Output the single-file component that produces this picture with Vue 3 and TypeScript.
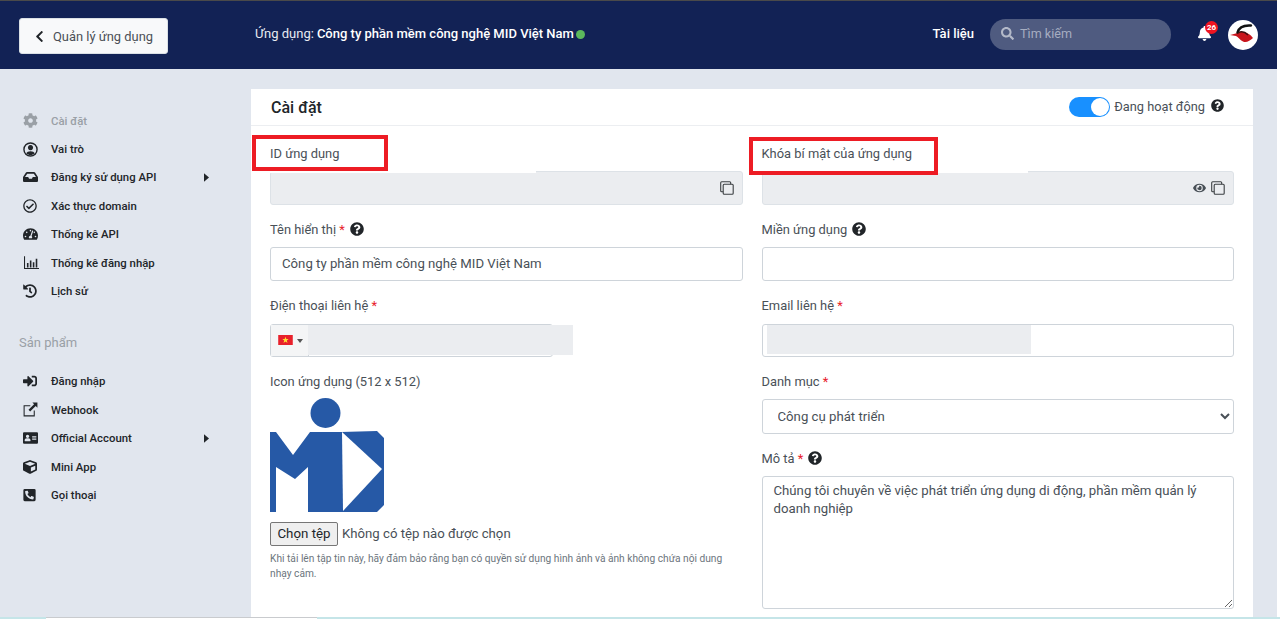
<script setup lang="ts">
interface NavItem { label: string; vb: string; d: string; w: number; h: number; caret?: boolean; muted?: boolean }
const cog = 'M487.4 315.7l-42.6-24.6c4.3-23.2 4.3-47 0-70.2l42.6-24.6c4.9-2.8 7.1-8.6 5.5-14-11.1-35.6-30-67.8-54.7-94.6-3.8-4.1-10-5.1-14.8-2.3L380.8 110c-17.9-15.4-38.5-27.3-60.8-35.1V25.8c0-5.6-3.9-10.5-9.4-11.7-36.7-8.2-74.3-7.8-109.2 0-5.5 1.2-9.4 6.1-9.4 11.7V75c-22.2 7.9-42.8 19.8-60.8 35.1L88.7 85.5c-4.9-2.8-11-1.9-14.8 2.3-24.7 26.7-43.6 58.9-54.7 94.6-1.7 5.4.6 11.2 5.5 14L67.3 221c-4.3 23.2-4.3 47 0 70.2l-42.6 24.6c-4.9 2.8-7.1 8.6-5.5 14 11.1 35.6 30 67.8 54.7 94.6 3.8 4.1 10 5.1 14.8 2.3l42.6-24.6c17.9 15.4 38.5 27.3 60.8 35.1v49.2c0 5.6 3.9 10.5 9.4 11.7 36.7 8.2 74.3 7.8 109.2 0 5.5-1.2 9.4-6.1 9.4-11.7v-49.2c22.2-7.9 42.8-19.8 60.8-35.1l42.6 24.6c4.9 2.8 11 1.9 14.8-2.3 24.7-26.7 43.6-58.9 54.7-94.6 1.5-5.5-.7-11.3-5.6-14.1zM256 336c-44.1 0-80-35.9-80-80s35.9-80 80-80 80 35.9 80 80-35.9 80-80 80z'
const userCircle = 'M248 8a248 248 0 1 0 0 496a248 248 0 1 0 0-496zM248 56a200 200 0 1 1 0 400a200 200 0 1 1 0-400zM248 105a88 88 0 1 0 .01 0zM105 385c20-48 70-72 143-72s123 24 143 72c-35 38-90 62-143 62s-108-24-143-62z'
const inbox = 'M567.938 243.908L462.25 85.374A48.003 48.003 0 0 0 422.311 64H153.689a48 48 0 0 0-39.938 21.374L8.062 243.908A47.994 47.994 0 0 0 0 270.533V400c0 26.51 21.49 48 48 48h480c26.51 0 48-21.49 48-48V270.533a47.994 47.994 0 0 0-8.062-26.625zM162.252 128h251.497l85.333 128H376l-32 64H232l-32-64H76.918l85.334-128z'
const checkCircle = 'M256 8C119.033 8 8 119.033 8 256s111.033 248 248 248 248-111.033 248-248S392.967 8 256 8zm0 48c110.532 0 200 89.451 200 200 0 110.532-89.451 200-200 200-110.532 0-200-89.451-200-200 0-110.532 89.451-200 200-200m140.204 130.267l-22.536-22.718c-4.667-4.705-12.265-4.736-16.97-.068L215.346 303.697l-59.792-60.277c-4.667-4.705-12.265-4.736-16.97-.069l-22.719 22.536c-4.705 4.667-4.736 12.265-.068 16.971l90.781 91.516c4.667 4.705 12.265 4.736 16.97.068l172.589-171.204c4.704-4.668 4.734-12.266.067-16.971z'
const gauge = 'M288 32C128.94 32 0 160.94 0 320c0 52.8 14.25 102.26 39.06 144.8 5.61 9.62 16.3 15.2 27.44 15.2h443c11.14 0 21.83-5.58 27.44-15.2C561.75 422.26 576 372.8 576 320c0-159.06-128.94-288-288-288zm0 64c14.71 0 26.58 10.13 30.32 23.65-1.11 2.26-2.64 4.23-3.45 6.67l-9.22 27.67c-5.13 3.49-10.97 6.01-17.64 6.01-17.67 0-32-14.33-32-32S270.33 96 288 96zM96 384c-17.67 0-32-14.33-32-32s14.33-32 32-32 32 14.33 32 32-14.33 32-32 32zm48-160c-17.67 0-32-14.33-32-32s14.33-32 32-32 32 14.33 32 32-14.33 32-32 32zm246.77-72.41l-61.33 184C343.13 347.33 352 364.54 352 384c0 11.72-3.38 22.55-8.88 32H232.88c-5.5-9.45-8.88-20.28-8.88-32 0-33.94 26.5-61.43 59.9-63.59l61.34-184.01c4.17-12.56 17.73-19.45 30.36-15.17 12.57 4.19 19.35 17.79 15.17 30.36zm14.66 57.2l15.52-46.55c3.47-1.29 7.13-2.23 11.05-2.23 17.67 0 32 14.33 32 32s-14.33 32-32 32c-11.38-.01-20.89-6.28-26.57-15.22zM480 384c-17.67 0-32-14.33-32-32s14.33-32 32-32 32 14.33 32 32-14.33 32-32 32z'
const chart = 'M0 40h36v404h476v36H0zM100 270h54v160H100zM200 190h54v240h-54zM300 250h54v180h-54zM400 130h54v300h-54z'
const history = 'M504 255.531c.253 136.64-111.18 248.372-247.82 248.468-59.015.042-113.223-20.53-155.822-54.911-11.077-8.94-11.905-25.541-1.839-35.607l11.267-11.267c8.609-8.609 22.353-9.551 31.891-1.984C173.062 425.135 212.781 440 256 440c101.705 0 184-82.311 184-184 0-101.705-82.311-184-184-184-48.814 0-93.149 18.969-126.068 49.932l50.754 50.754c10.08 10.08 2.941 27.314-11.313 27.314H24c-8.837 0-16-7.163-16-16V38.627c0-14.254 17.234-21.393 27.314-11.314l49.372 49.372C129.209 34.136 189.552 8 256 8c136.81 0 247.747 110.78 248 247.531zm-180.912 78.784l9.823-12.63c8.138-10.463 6.253-25.542-4.21-33.679L288 256.349V152c0-13.255-10.745-24-24-24h-16c-13.255 0-24 10.745-24 24v135.651l65.409 50.874c10.463 8.137 25.541 6.253 33.679-4.21z'
const signIn = 'M416 448h-84c-6.6 0-12-5.4-12-12v-40c0-6.6 5.4-12 12-12h84c17.7 0 32-14.3 32-32V160c0-17.7-14.3-32-32-32h-84c-6.6 0-12-5.4-12-12V76c0-6.6 5.4-12 12-12h84c53 0 96 43 96 96v192c0 53-43 96-96 96zm-47-201L201 79c-15-15-41-4.5-41 17v96H24c-13.3 0-24 10.7-24 24v96c0 13.3 10.7 24 24 24h136v96c0 21.5 26 32 41 17l168-168c9.3-9.4 9.3-24.6 0-34z'
const extLink = 'M20 110h230v36H56v310h310V290h36v202H20zM320 20h172v172l-58-58-190 190-56-56 190-190z'
const card = 'M528 32H48C21.5 32 0 53.5 0 80v352c0 26.5 21.5 48 48 48h480c26.5 0 48-21.5 48-48V80c0-26.5-21.5-48-48-48zM176 128c35.3 0 64 28.7 64 64s-28.7 64-64 64-64-28.7-64-64 28.7-64 64-64zm112 232c0 13.3-14.3 24-32 24H96c-17.7 0-32-10.7-32-24v-24c0-39.8 37.6-72 84-72h56c46.4 0 84 32.2 84 72zm224-24H352v-32h160zm0-64H352v-32h160zm0-64H352v-32h160z'
const cube = 'M239.1 6.3l-208 78c-18.7 7-31.1 25-31.1 45v225.1c0 18.2 10.3 34.8 26.5 42.9l208 104c13.5 6.8 29.4 6.8 42.9 0l208-104c16.3-8.1 26.5-24.8 26.5-42.9V129.3c0-20-12.4-37.9-31.1-44.9l-208-78C262 2.2 250 2.2 239.1 6.3zM256 68.4l192 72v1.1l-192 78-192-78v-1.1l192-72zm32 356V275.5l160-65v133.9l-160 80z'
const phone = 'M400 32H48A48 48 0 0 0 0 80v352a48 48 0 0 0 48 48h352a48 48 0 0 0 48-48V80a48 48 0 0 0-48-48zm-16.39 307.37l-15 65A15 15 0 0 1 354 416C194 416 64 286.29 64 126a15.7 15.7 0 0 1 11.63-14.61l65-15A18.23 18.23 0 0 1 144 96a16.27 16.27 0 0 1 13.79 9.09l30 70A17.9 17.9 0 0 1 189 181a17 17 0 0 1-5.5 11.61l-37.89 31a231.91 231.91 0 0 0 110.78 110.78l31-37.89A17 17 0 0 1 299 291a17.85 17.85 0 0 1 5.91 1.21l70 30A16.25 16.25 0 0 1 384 336a17.41 17.41 0 0 1-.39 3.37z'

const mainNav: NavItem[] = [
  { label: 'Cài đặt', vb: '0 0 512 512', d: cog, w: 15, h: 15, muted: true },
  { label: 'Vai trò', vb: '0 0 496 512', d: userCircle, w: 15, h: 15 },
  { label: 'Đăng ký sử dụng API', vb: '0 0 576 512', d: inbox, w: 15, h: 14, caret: true },
  { label: 'Xác thực domain', vb: '0 0 512 512', d: checkCircle, w: 14, h: 14 },
  { label: 'Thống kê API', vb: '0 0 576 512', d: gauge, w: 15, h: 14 },
  { label: 'Thống kê đăng nhập', vb: '0 0 512 512', d: chart, w: 17, h: 15 },
  { label: 'Lịch sử', vb: '0 0 512 512', d: history, w: 14, h: 14 },
]
const productNav: NavItem[] = [
  { label: 'Đăng nhập', vb: '0 0 512 512', d: signIn, w: 14, h: 14 },
  { label: 'Webhook', vb: '0 0 512 512', d: extLink, w: 15, h: 15 },
  { label: 'Official Account', vb: '0 0 576 512', d: card, w: 15, h: 14, caret: true },
  { label: 'Mini App', vb: '0 0 512 512', d: cube, w: 14, h: 14 },
  { label: 'Gọi thoại', vb: '0 0 448 512', d: phone, w: 13, h: 14 },
]
const help = 'M504 256c0 136.997-111.043 248-248 248S8 392.997 8 256C8 119.083 119.043 8 256 8s248 111.083 248 248zM262.655 90c-54.497 0-89.255 22.957-116.549 63.758-3.536 5.286-2.353 12.415 2.715 16.258l34.699 26.31c5.205 3.947 12.621 3.008 16.665-2.122 17.864-22.658 30.113-35.797 57.303-35.797 20.429 0 45.698 13.148 45.698 32.958 0 14.976-12.363 22.667-32.534 33.976C247.128 238.528 216 254.941 216 296v4c0 6.627 5.373 12 12 12h56c6.627 0 12-5.373 12-12v-1.333c0-28.462 83.186-29.647 83.186-106.667 0-58.002-60.165-102-116.531-102zM256 338c-25.365 0-46 20.635-46 46 0 25.364 20.635 46 46 46s46-20.636 46-46c0-25.365-20.635-46-46-46z'
const eye = 'M572.52 241.4C518.29 135.59 410.93 64 288 64S57.68 135.64 3.48 241.41a32.35 32.35 0 0 0 0 29.19C57.71 376.41 165.07 448 288 448s230.32-71.64 284.52-177.41a32.35 32.35 0 0 0 0-29.19zM288 400a144 144 0 1 1 144-144 143.93 143.93 0 0 1-144 144zm0-240a95.31 95.31 0 0 0-25.31 3.79 47.85 47.85 0 0 1-66.9 66.9A95.78 95.78 0 1 0 288 160z'
const appName = 'Công ty phần mềm công nghệ MID Việt Nam'
const description = 'Chúng tôi chuyên về việc phát triển ứng dụng di động, phần mềm quản lý doanh nghiệp'
</script>

<template>
  <div class="page">
    <header class="topbar">
      <button class="back" type="button">
        <svg class="back-ico" viewBox="0 0 320 512"><path d="M34.52 239.03L228.87 44.69c9.37-9.37 24.57-9.37 33.94 0l22.67 22.67c9.36 9.36 9.37 24.52.04 33.9L131.49 256l154.02 154.75c9.34 9.38 9.32 24.54-.04 33.9l-22.67 22.67c-9.37 9.37-24.57 9.37-33.94 0L34.52 272.97c-9.37-9.37-9.37-24.57 0-33.94z" /></svg>
        <span>Quản lý ứng dụng</span>
      </button>
      <div class="app-title">Ứng dụng: <b>{{ appName }}</b><i class="dot"></i></div>
      <a class="docs">Tài liệu</a>
      <div class="search">
        <svg class="search-ico" viewBox="0 0 512 512"><path d="M505 442.7L405.3 343c-4.5-4.5-10.6-7-17-7H372c27.6-35.3 44-79.7 44-128C416 93.1 322.9 0 208 0S0 93.1 0 208s93.1 208 208 208c48.3 0 92.7-16.4 128-44v16.3c0 6.4 2.5 12.5 7 17l99.7 99.7c9.4 9.4 24.6 9.4 33.9 0l28.3-28.3c9.4-9.4 9.4-24.6.1-34zM208 336c-70.7 0-128-57.2-128-128 0-70.7 57.2-128 128-128 70.7 0 128 57.2 128 128 0 70.7-57.2 128-128 128z" /></svg>
        <span>Tìm kiếm</span>
      </div>
      <div class="bell">
        <svg viewBox="0 0 448 512"><path d="M224 512c35.32 0 63.97-28.65 63.97-64H160.03c0 35.35 28.65 64 63.97 64zm215.39-149.71c-19.32-20.76-55.47-51.99-55.47-154.29 0-77.7-54.48-139.9-127.94-155.16V32c0-17.67-14.32-32-31.98-32s-31.98 14.33-31.98 32v20.84C118.56 68.1 64.08 130.3 64.08 208c0 102.3-36.15 133.53-55.47 154.29-6 6.45-8.66 14.16-8.61 21.71.11 16.4 12.98 32 32.1 32h383.8c19.12 0 32-15.6 32.1-32 .05-7.55-2.61-15.27-8.61-21.71z" /></svg>
        <span class="badge">26</span>
      </div>
      <svg class="avatar" viewBox="0 0 30 30">
        <circle cx="15" cy="15" r="15" fill="#fff" />
        <path d="M2 15C8 13.5 11 12 14 12C19 12 23 15 25 18C22 21 18 23 15 21.5C12 20 10 17 8 16C6 15.5 4 15.5 2 15Z" fill="#c8141c" />
        <path d="M23 5.5C16 5 11 7 9.5 12.5" fill="none" stroke="#111" stroke-width="2.5" stroke-linecap="round" />
        <path d="M10 13C13 11 17 12 20 15" fill="none" stroke="#3a1012" stroke-width="1.4" />
      </svg>
    </header>

    <div class="body">
      <aside class="sidebar">
        <nav class="nav">
          <a v-for="item in mainNav" :key="item.label" class="nav-item" :class="{ muted: item.muted }">
            <span class="nav-ico"><svg :viewBox="item.vb" :width="item.w" :height="item.h"><path :d="item.d" /></svg></span>
            <span class="nav-label">{{ item.label }}</span>
            <svg v-if="item.caret" class="caret" viewBox="0 0 6 10"><path d="M0 0l6 5-6 5z" /></svg>
          </a>
        </nav>
        <div class="nav-head">Sản phẩm</div>
        <nav class="nav">
          <a v-for="item in productNav" :key="item.label" class="nav-item">
            <span class="nav-ico"><svg :viewBox="item.vb" :width="item.w" :height="item.h"><path :d="item.d" /></svg></span>
            <span class="nav-label">{{ item.label }}</span>
            <svg v-if="item.caret" class="caret" viewBox="0 0 6 10"><path d="M0 0l6 5-6 5z" /></svg>
          </a>
        </nav>
      </aside>

      <main class="card">
        <div class="card-head">
          <h1>Cài đặt</h1>
          <div class="status">
            <span class="toggle"><i></i></span>
            <span class="status-text">Đang hoạt động</span>
            <svg class="help status-help" viewBox="0 0 512 512"><path :d="help" /></svg>
          </div>
        </div>

        <div class="form">
          <div class="col">
            <div class="field">
              <label class="lab boxed">ID ứng dụng</label>
              <div class="input disabled">
                <svg class="copy" viewBox="0 0 14 14"><rect x="0.7" y="0.7" width="10" height="10" rx="1" /><rect x="3.2" y="3.2" width="10" height="10" rx="1" class="copy-front" /></svg>
              </div>
            </div>
            <div class="field">
              <label class="lab">Tên hiển thị <em>*</em><svg class="help" viewBox="0 0 512 512"><path :d="help" /></svg></label>
              <input class="input text" :value="appName" />
            </div>
            <div class="field shifted">
              <label class="lab">Điện thoại liên hệ <em>*</em></label>
              <div class="phone">
                <span class="flag-box">
                  <svg class="flag" viewBox="0 0 16 11"><rect width="16" height="11" fill="#e8212b" /><path d="M8 2l.9 2.5h2.6l-2.1 1.6.8 2.6L8 7.1 5.8 8.7l.8-2.6-2.1-1.6h2.6z" fill="#ffe033" /></svg>
                  <i class="flag-caret"></i>
                </span>
                <span class="phone-mask"></span>
              </div>
            </div>
            <div class="field icon-field">
              <label class="lab">Icon ứng dụng (512 x 512)</label>
              <svg class="logo" viewBox="0 0 114 114">
                <circle cx="55.5" cy="15" r="15" fill="#2659a6" />
                <path d="M0 34H6L23 57 40 34H71L107 33 114 40V107L107 114H38V69L25 81 6 69V114H0Z" fill="#2659a6" />
                <path d="M72 34L112 71 73 113Z" fill="#fff" />
              </svg>
              <div class="file-row">
                <button class="file-btn" type="button">Chọn tệp</button>
                <span class="file-name">Không có tệp nào được chọn</span>
              </div>
              <p class="hint">Khi tải lên tập tin này, hãy đảm bảo rằng bạn có quyền sử dụng hình ảnh và ảnh không chứa nội dung nhạy cảm.</p>
            </div>
          </div>

          <div class="col">
            <div class="field">
              <label class="lab boxed">Khóa bí mật của ứng dụng</label>
              <div class="input disabled">
                <svg class="eye" viewBox="0 0 576 512"><path :d="eye" /></svg>
                <svg class="copy" viewBox="0 0 14 14"><rect x="0.7" y="0.7" width="10" height="10" rx="1" /><rect x="3.2" y="3.2" width="10" height="10" rx="1" class="copy-front" /></svg>
              </div>
            </div>
            <div class="field">
              <label class="lab">Miền ứng dụng<svg class="help" viewBox="0 0 512 512"><path :d="help" /></svg></label>
              <input class="input text" value="" />
            </div>
            <div class="field shifted">
              <label class="lab">Email liên hệ <em>*</em></label>
              <div class="input email"><span class="email-mask"></span></div>
            </div>
            <div class="field">
              <label class="lab">Danh mục <em>*</em></label>
              <select class="input select"><option>Công cụ phát triển</option></select>
            </div>
            <div class="field">
              <label class="lab">Mô tả <em>*</em><svg class="help" viewBox="0 0 512 512"><path :d="help" /></svg></label>
              <textarea class="input area" :value="description"></textarea>
            </div>
          </div>
        </div>
      </main>
    </div>
    <div class="strip"></div>
  </div>
</template>

<style>
html, body { margin: 0; overflow: hidden; }
</style>

<style scoped>
.page { width: 1280px; height: 619px; display: flex; flex-direction: column; overflow: hidden; background: #fff; font-family: Roboto, "Noto Sans", sans-serif; font-size: 12.9px; color: #495057; box-sizing: border-box; }

.topbar { flex: 0 0 69px; width: 1277px; display: flex; align-items: center; background: #122255; border-top: 1px solid #4a4a4a; padding: 0 19px 1px 19px; box-sizing: border-box; color: #fff; }
.back { width: 149px; height: 36px; margin-top: 3px; display: flex; align-items: center; gap: 9px; padding: 0 0 0 15px; background: #f8f9fa; border: 1px solid #dae0e5; border-radius: 3px; font: 12.9px Roboto, sans-serif; color: #4a4f55; box-sizing: border-box; }
.back-ico { width: 9px; height: 13px; fill: #212529; }
.app-title { margin: 0 0 3px 87px; font-size: 13px; color: #e8ebf2; display: flex; align-items: center; }
.app-title b { font-weight: 500; color: #fff; margin-left: 3px; }
.dot { width: 9px; height: 9px; border-radius: 50%; background: #5cb85c; margin: 2px 0 0 2px; }
.docs { margin: 0 0 3px auto; font-size: 13px; font-weight: 500; color: #fff; }
.search { width: 181px; height: 31px; margin-left: 16px; display: flex; align-items: center; gap: 6px; padding: 0 0 3px 11px; background: #4f5b80; border-radius: 16px; box-sizing: border-box; font-size: 12.6px; color: #a6adc0; }
.search-ico { width: 13px; height: 13px; fill: #b4bac9; }
.bell { position: relative; width: 13px; height: 15px; margin: 0 0 2px 27px; }
.bell svg { display: block; width: 13px; height: 15px; fill: #fff; }
.badge { position: absolute; left: 7px; top: -5px; width: 13px; height: 13px; border-radius: 50%; background: #f01421; color: #fff; font-size: 8px; font-weight: 700; line-height: 13px; text-align: center; }
.avatar { width: 30px; height: 30px; margin: 1px 0 0 17px; }

.body { flex: 1; min-height: 0; width: 1277px; display: flex; background: #e1e6ee; }
.sidebar { flex: 0 0 251px; padding-top: 37.5px; box-sizing: border-box; }
.nav { display: flex; flex-direction: column; }
.nav-item { height: 28.4px; display: flex; align-items: center; padding-left: 23px; font-size: 11.35px; font-weight: 500; color: #212529; }
.nav-item.muted { color: #9aa0a6; }
.nav-ico { width: 28px; display: flex; align-items: center; }
.nav-ico svg { fill: #212529; display: block; }
.nav-item.muted .nav-ico svg { fill: #9aa0a6; }
.nav-label { width: 153px; }
.caret { width: 5px; height: 9px; fill: #212529; }
.nav-head { margin: 27.5px 0 14.5px 19px; font-size: 13px; line-height: 20px; color: #9aa0a6; }

.card { width: 1002px; margin-top: 20px; background: #fff; padding: 0 19px; box-sizing: border-box; overflow: hidden; }
.card-head { height: 37px; margin: 0 -19px; padding: 0 29px 2px 20px; display: flex; align-items: center; justify-content: space-between; border-bottom: 1px solid #eceef1; box-sizing: border-box; }
.card-head h1 { margin: 2px 0 0; font-size: 16px; font-weight: 500; color: #212529; }
.status { display: flex; align-items: center; }
.toggle { width: 41px; height: 20px; border-radius: 10px; background: #1890ff; position: relative; margin-top: 1px; }
.toggle i { position: absolute; right: 1px; top: 1px; width: 18px; height: 18px; border-radius: 50%; background: #fff; }
.status-text { margin-left: 4px; font-size: 12.8px; color: #495057; }
.help { width: 14px; height: 14px; fill: #212529; margin-left: 5px; }
.status-help { width: 13px; height: 13px; margin-left: 6px; margin-top: -2px; }

.form { display: flex; gap: 19px; padding-top: 17px; }
.col { flex: 1; min-width: 0; display: flex; flex-direction: column; gap: 14px; }
.field { display: flex; flex-direction: column; }
.lab { position: relative; z-index: 1; display: flex; align-items: center; height: 20px; margin-bottom: 8px; white-space: pre; }
.shifted .lab { margin-bottom: 9px; }
.lab em { color: #e8212b; font-style: normal; }
.boxed::before { content: ""; position: absolute; left: -18px; top: -8px; width: 136px; height: 36px; border: 4px solid #ed1c24; box-sizing: border-box; pointer-events: none; }
.col:last-child .boxed::before { left: -13px; top: -6px; width: 189px; height: 38px; }
.input { width: 100%; height: 34px; border: 1px solid #ced4da; border-radius: 3px; background: #fff; box-sizing: border-box; font: 13.2px Roboto, sans-serif; color: #495057; outline: none; }
.text { padding: 0 11px 1px; }
.disabled { position: relative; background: #ebedf0; display: flex; align-items: center; justify-content: flex-end; padding-right: 8px; gap: 5px; border-color: #dde2e7; }
.disabled::before { content: ""; position: absolute; left: -1px; top: -1px; width: 266px; height: 2px; background: #fff; }
.copy { width: 14px; height: 14px; fill: none; stroke: #3c4043; stroke-width: 1.1; }
.copy-front { fill: #ebedf0; }
.eye { width: 13px; height: 12px; fill: #495057; }
.phone { position: relative; display: flex; height: 33px; width: 283px; border: 1px solid #ced4da; border-radius: 3px; box-sizing: border-box; }
.flag-box { width: 38px; display: flex; align-items: center; padding-left: 7px; gap: 4px; background: #f4f5f6; border-right: 1px solid #ced4da; box-sizing: border-box; }
.flag { width: 15px; height: 10px; margin-top: -2px; }
.flag-caret { border: 3px solid transparent; border-top: 4px solid #555; margin-top: 3px; }
.phone-mask { position: absolute; left: 37px; top: 0; width: 265px; height: 30px; background: #ebedf0; }
.email { position: relative; height: 33px; }
.email-mask { position: absolute; left: 4px; top: 0; width: 264px; height: 29px; background: #ebedf0; }
.icon-field .lab { margin-bottom: 7px; }
.logo { width: 114px; height: 114px; display: block; }
.file-row { display: flex; align-items: center; gap: 4px; margin-top: 10px; height: 24px; font-size: 13.2px; color: #495057; }
.file-name { margin-top: -2px; }
.file-btn { width: 68px; height: 24px; padding: 0 0 2px; background: #efefef; border: 1px solid #767676; border-radius: 2px; font: 13.3px Roboto, sans-serif; color: #212529; }
.hint { margin: 5px 0 0; font-size: 10.2px; line-height: 15px; color: #6c757d; width: 460px; }
.select { height: 35px; padding: 0 0 0 11px; }
.area { height: 133px; padding: 5px 11px; line-height: 18px; resize: vertical; }
.strip { flex: 0 0 2px; background: linear-gradient(#c9cbce, #c9cbce) 46px 0 / 271px 1px no-repeat, linear-gradient(to right, #c5e5e8 0 46px, #fff 46px 317px, #c5e5e8 317px); }
</style>
